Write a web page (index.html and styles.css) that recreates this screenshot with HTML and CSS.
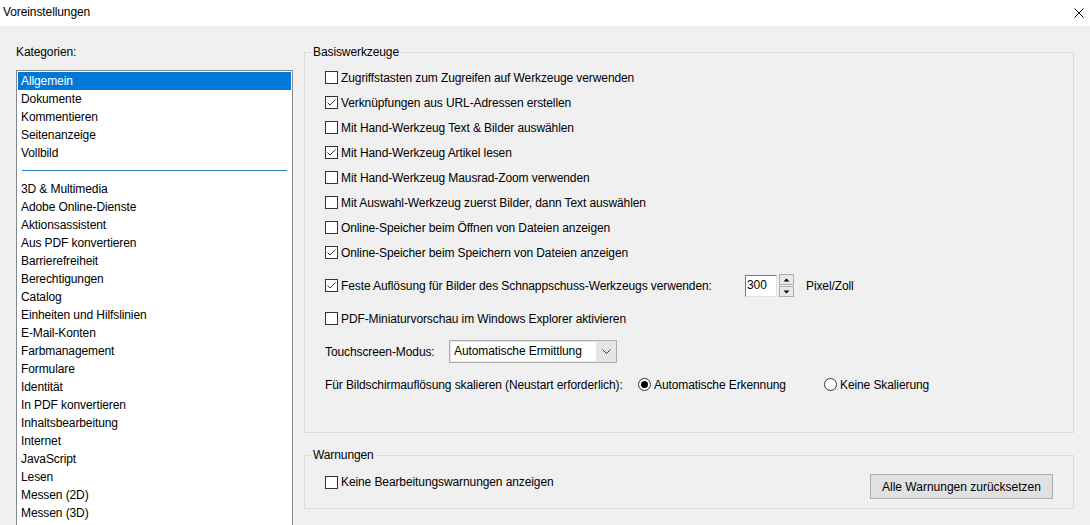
FILE: index.html
```html
<!DOCTYPE html>
<html lang="de">
<head>
  <meta charset="UTF-8" />
  <title>Voreinstellungen</title>
  <link rel="stylesheet" href="styles.css">
</head>
<body>
  <div class="titlebar">
    <span class="title">Voreinstellungen</span>
    <svg class="close" width="10" height="10" viewBox="0 0 10 10"><path d="M0.5 0.5 L9.5 9.5 M9.5 0.5 L0.5 9.5" stroke="#000" stroke-width="1" fill="none"/></svg>
  </div>

  <div class="main">
    <div class="left">
      <div class="cat-label">Kategorien:</div>
      <ul class="list">
        <li class="selected">Allgemein</li>
        <li>Dokumente</li>
        <li>Kommentieren</li>
        <li>Seitenanzeige</li>
        <li>Vollbild</li>
        <li class="sep"></li>
        <li>3D &amp; Multimedia</li>
        <li>Adobe Online-Dienste</li>
        <li>Aktionsassistent</li>
        <li>Aus PDF konvertieren</li>
        <li>Barrierefreiheit</li>
        <li>Berechtigungen</li>
        <li>Catalog</li>
        <li>Einheiten und Hilfslinien</li>
        <li>E-Mail-Konten</li>
        <li>Farbmanagement</li>
        <li>Formulare</li>
        <li>Identität</li>
        <li>In PDF konvertieren</li>
        <li>Inhaltsbearbeitung</li>
        <li>Internet</li>
        <li>JavaScript</li>
        <li>Lesen</li>
        <li>Messen (2D)</li>
        <li>Messen (3D)</li>
      </ul>
    </div>

    <div class="right">
      <fieldset class="group">
        <legend>Basiswerkzeuge</legend>
        <div class="row"><span class="cb"></span>Zugriffstasten zum Zugreifen auf Werkzeuge verwenden</div>
        <div class="row"><span class="cb checked"><svg width="11" height="11" viewBox="0 0 11 11"><path d="M1.5 5.5 L4 8 L9.5 2.5" stroke="#333" stroke-width="1" fill="none"/></svg></span>Verknüpfungen aus URL-Adressen erstellen</div>
        <div class="row"><span class="cb"></span>Mit Hand-Werkzeug Text &amp; Bilder auswählen</div>
        <div class="row"><span class="cb checked"><svg width="11" height="11" viewBox="0 0 11 11"><path d="M1.5 5.5 L4 8 L9.5 2.5" stroke="#333" stroke-width="1" fill="none"/></svg></span>Mit Hand-Werkzeug Artikel lesen</div>
        <div class="row"><span class="cb"></span>Mit Hand-Werkzeug Mausrad-Zoom verwenden</div>
        <div class="row"><span class="cb"></span>Mit Auswahl-Werkzeug zuerst Bilder, dann Text auswählen</div>
        <div class="row"><span class="cb"></span>Online-Speicher beim Öffnen von Dateien anzeigen</div>
        <div class="row"><span class="cb checked"><svg width="11" height="11" viewBox="0 0 11 11"><path d="M1.5 5.5 L4 8 L9.5 2.5" stroke="#333" stroke-width="1" fill="none"/></svg></span>Online-Speicher beim Speichern von Dateien anzeigen</div>

        <div class="wide-rows">
          <div class="row tall">
            <span class="snap-label"><span class="cb checked"><svg width="11" height="11" viewBox="0 0 11 11"><path d="M1.5 5.5 L4 8 L9.5 2.5" stroke="#333" stroke-width="1" fill="none"/></svg></span>Feste Auflösung für Bilder des Schnappschuss-Werkzeugs verwenden:</span>
            <span class="spin">
              <span class="spin-input">300</span>
              <span class="spin-btns">
                <span class="spin-btn"><svg width="7" height="4" viewBox="0 0 7 4"><path d="M0.5 3.5 L3.5 0.5 L6.5 3.5 Z" fill="#000"/></svg></span>
                <span class="spin-btn"><svg width="7" height="4" viewBox="0 0 7 4"><path d="M0.5 0.5 L3.5 3.5 L6.5 0.5 Z" fill="#000"/></svg></span>
              </span>
            </span>
            <span class="unit">Pixel/Zoll</span>
          </div>
          <div class="row tall"><span class="cb"></span>PDF-Miniaturvorschau im Windows Explorer aktivieren</div>
          <div class="row tall">
            <span class="touch-label">Touchscreen-Modus:</span>
            <span class="select">
              <span class="select-text">Automatische Ermittlung</span>
              <span class="select-arrow"><svg width="9" height="5" viewBox="0 0 9 5"><path d="M0.5 0.5 L4.5 4.5 L8.5 0.5" stroke="#333" stroke-width="1" fill="none"/></svg></span>
            </span>
          </div>
          <div class="row tall">
            <span class="scale-label">Für Bildschirmauflösung skalieren (Neustart erforderlich):</span>
            <span class="radio-opt first"><span class="radio on"></span>Automatische Erkennung</span>
            <span class="radio-opt"><span class="radio"></span>Keine Skalierung</span>
          </div>
        </div>
      </fieldset>

      <fieldset class="group warn">
        <legend>Warnungen</legend>
        <div class="warn-row">
          <div class="row short"><span class="cb"></span>Keine Bearbeitungswarnungen anzeigen</div>
          <button class="btn">Alle Warnungen zurücksetzen</button>
        </div>
      </fieldset>
    </div>
  </div>
</body>
</html>
```

FILE: styles.css
```css
html, body {
  margin: 0;
  padding: 0;
  height: 100%;
  overflow: hidden;
}
body {
  font-family: 'Liberation Sans', Arial, sans-serif;
  font-size: 12px;
  line-height: 16px;
  letter-spacing: -0.1px;
  color: #000;
  background: #f0f0f0;
}
.titlebar {
  height: 26px;
  background: #fff;
  display: flex;
  align-items: center;
  justify-content: space-between;
  padding: 0 6px 2px 3px;
  box-sizing: border-box;
}
.close {
  margin-top: 2px;
}
.main {
  display: flex;
  padding: 18px 16px 0 16px;
  gap: 11px;
}
.left {
  width: 277px;
  flex: none;
}
.cat-label {
  margin-bottom: 10px;
}
.list {
  list-style: none;
  margin: 0;
  padding: 1px;
  background: #fff;
  border: 1px solid #828790;
  border-bottom: none;
  height: 470px;
  overflow: hidden;
}
.list li {
  height: 18px;
  line-height: 18px;
  padding-left: 3px;
  white-space: nowrap;
}
.list li.selected {
  background: #0078d7;
  color: #fff;
}
.list li.sep {
  height: 18px;
  display: flex;
  align-items: center;
  padding: 0 4px 1px 4px;
  box-sizing: border-box;
}
.list li.sep::after {
  content: "";
  flex: 1;
  height: 1px;
  background: #2b86c5;
}
.right {
  flex: none;
  width: 770px;
}
.group {
  margin: 0;
  border: 1px solid #dcdcdc;
  padding: 5px 20px 31px 20px;
  min-width: 0;
}
.group legend {
  padding: 0 2px;
  margin-left: -14px;
  line-height: 16px;
}
.row {
  height: 25px;
  display: flex;
  align-items: center;
  white-space: nowrap;
}
.wide-rows {
  margin-top: 4px;
}
.row.tall {
  height: 33px;
}
.cb {
  width: 11px;
  height: 11px;
  border: 1px solid #333;
  background: #fff;
  margin-right: 3px;
  flex: none;
  display: flex;
}
.snap-label {
  width: 420px;
  display: flex;
  align-items: center;
}
.spin {
  display: flex;
  align-items: center;
  gap: 2px;
}
.spin-input {
  width: 32px;
  height: 22px;
  line-height: 19px;
  box-sizing: border-box;
  background: #fff;
  border: 1px solid #7a7a7a;
  border-right-color: #e3e3e3;
  border-bottom-color: #e3e3e3;
  padding-left: 1px;
}
.spin-btns {
  display: flex;
  flex-direction: column;
  gap: 1px;
}
.spin-btn {
  width: 13px;
  height: 9px;
  border: 1px solid #adadad;
  background: #e9e9e9;
  display: flex;
  align-items: center;
  justify-content: center;
}
.unit {
  margin-left: 12px;
}
.touch-label {
  width: 124px;
}
.select {
  width: 168px;
  height: 23px;
  box-sizing: border-box;
  border: 1px solid #adadad;
  background: #e5e5e5;
  display: flex;
}
.select-text {
  flex: 1;
  background: #fff;
  margin: 1px 0 1px 1px;
  padding-left: 3px;
  line-height: 19px;
}
.select-arrow {
  width: 20px;
  display: flex;
  align-items: center;
  justify-content: center;
  background: #e5e5e5;
}
.scale-label {
  width: 313px;
}
.radio-opt {
  display: flex;
  align-items: center;
}
.radio-opt.first {
  width: 186px;
}
.radio {
  width: 11px;
  height: 11px;
  border: 1px solid #333;
  border-radius: 50%;
  background: #fff;
  margin-right: 3px;
  display: flex;
  align-items: center;
  justify-content: center;
}
.radio.on::after {
  content: "";
  width: 7px;
  height: 7px;
  border-radius: 50%;
  background: #000;
}
.warn {
  margin-top: 14px;
  padding: 11px 20px 9px 20px;
}
.warn-row {
  display: flex;
  justify-content: space-between;
  align-items: flex-start;
}
.row.short {
  height: 16px;
}
.btn {
  font: inherit;
  width: 183px;
  height: 25px;
  background: #e1e1e1;
  border: 1px solid #adadad;
  padding: 0;
  color: #000;
}
```
